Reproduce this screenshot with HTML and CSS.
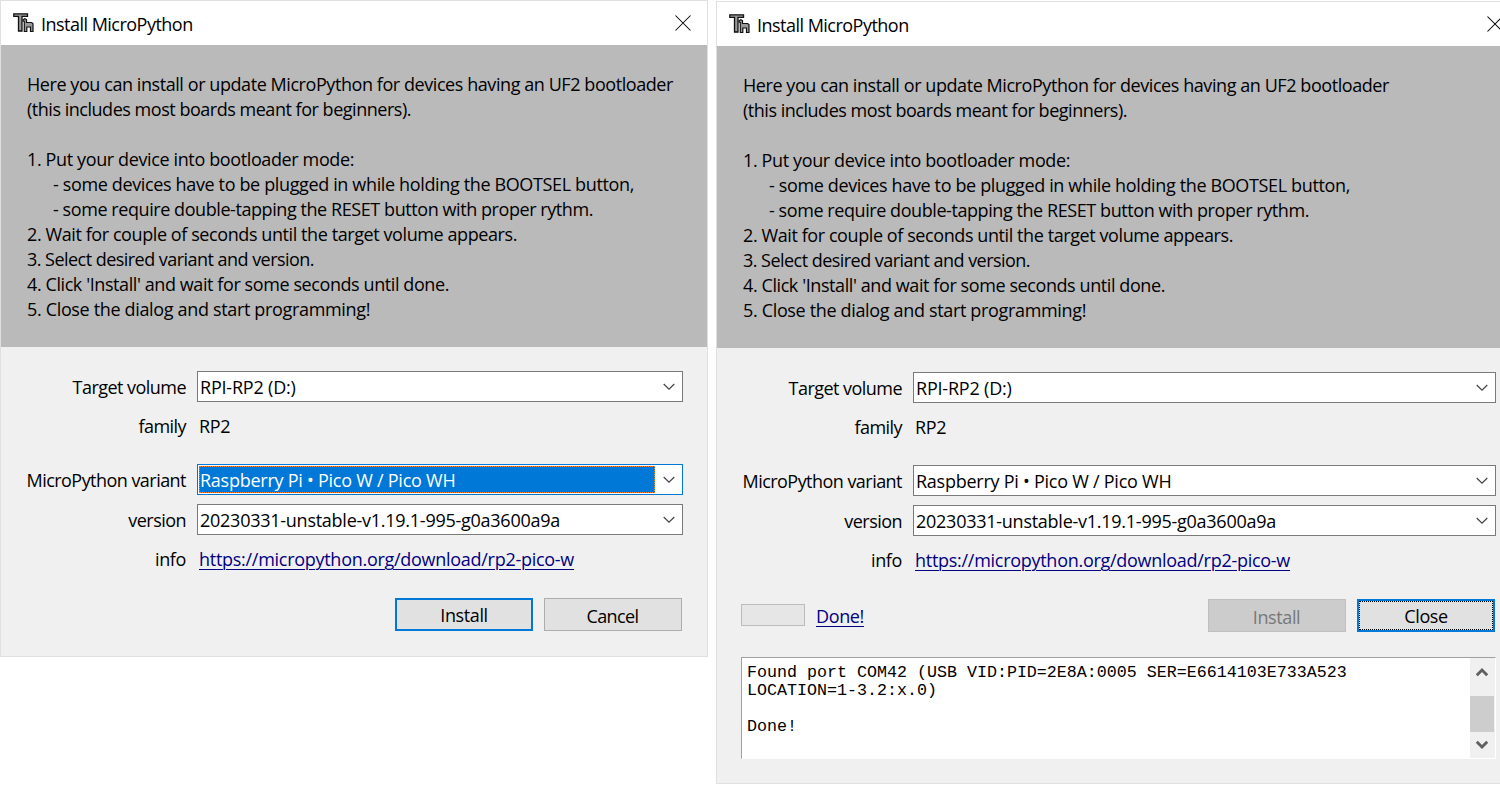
FILE: index.html
```
<!DOCTYPE html>
<html lang="en">
<head>
<meta charset="utf-8">
<title>Install MicroPython</title>
<link rel="stylesheet" href="styles.css">
</head>
<body>
<svg class="defs" aria-hidden="true">
  <symbol id="logo" viewBox="0 0 22 20">
    <path d="M.8 .8H14.500V3.400H9V18H5.500V3.400H.8Z" fill="#999" stroke="#111" stroke-width="1.300"/>
    <path d="M10 8V6.800L11.800 5.600L13.500 6.500V9.500H18.500L20 10.500V18.500H17.500V14H13.800V18.500H11.300V8.500Z" fill="#999" stroke="#111" stroke-width="1.200"/>
  </symbol>
  <symbol id="close" viewBox="0 0 16 16"><path d="M.5.5L15.500 15.500M15.500.5L.5 15.500" fill="none" stroke="#000" stroke-width="1.050"/></symbol>
  <symbol id="down" viewBox="0 0 12 8"><path d="M.7 1L6 6.200L11.300 1" fill="none" stroke="#444" stroke-width="1.200"/></symbol>
  <symbol id="thick-down" viewBox="0 0 12 10"><path d="M.8 1.800L6 7L11.200 1.800" fill="none" stroke="#606060" stroke-width="2.800"/></symbol>
</svg>

<main class="desktop">
  <section class="dialog first">
    <header class="titlebar">
      <svg class="logo"><use href="#logo"/></svg>
      <h1 class="s-title">Install MicroPython</h1>
      <svg class="close"><use href="#close"/></svg>
    </header>
    <div class="intro">
      <p class="s-here">Here you can install or update MicroPython for devices having an UF2 bootloader</p>
      <p class="s-this">(this includes most boards meant for beginners).</p>
      <p class="gap"></p>
      <p class="s-put">1. Put your device into bootloader mode:</p>
      <p class="sub s-some">- some devices have to be plugged in while holding the BOOTSEL button,</p>
      <p class="sub s-req">- some require double-tapping the RESET button with proper rythm.</p>
      <p class="s-wait">2. Wait for couple of seconds until the target volume appears.</p>
      <p class="s-sel">3. Select desired variant and version.</p>
      <p class="s-click">4. Click 'Install' and wait for some seconds until done.</p>
      <p class="s-end">5. Close the dialog and start programming!</p>
    </div>
    <div class="form">
      <label class="s-label">Target volume</label>
      <div class="select"><span class="s-rpi">RPI-RP2 (D:)</span><svg><use href="#down"/></svg></div>
      <label class="s-label plain">family</label>
      <span class="value s-rp">RP2</span>
      <label class="s-label">MicroPython variant</label>
      <div class="select focused"><span class="s-rasp">Raspberry Pi • Pico W / Pico WH</span><svg><use href="#down"/></svg></div>
      <label class="s-label">version</label>
      <div class="select"><span class="s-ver">20230331-unstable-v1.19.1-995-g0a3600a9a</span><svg><use href="#down"/></svg></div>
      <label class="s-put plain">info</label>
      <span class="value"><a class="s-url">https://micropython.org/download/rp2-pico-w</a></span>
    </div>
    <footer class="actions">
      <button class="btn default s-btn">Install</button>
      <button class="btn s-cancel">Cancel</button>
    </footer>
  </section>

  <section class="dialog second">
    <header class="titlebar">
      <svg class="logo"><use href="#logo"/></svg>
      <h1 class="s-title">Install MicroPython</h1>
      <svg class="close"><use href="#close"/></svg>
    </header>
    <div class="intro">
      <p class="s-here">Here you can install or update MicroPython for devices having an UF2 bootloader</p>
      <p class="s-this">(this includes most boards meant for beginners).</p>
      <p class="gap"></p>
      <p class="s-put">1. Put your device into bootloader mode:</p>
      <p class="sub s-some">- some devices have to be plugged in while holding the BOOTSEL button,</p>
      <p class="sub s-req">- some require double-tapping the RESET button with proper rythm.</p>
      <p class="s-wait">2. Wait for couple of seconds until the target volume appears.</p>
      <p class="s-sel">3. Select desired variant and version.</p>
      <p class="s-click">4. Click 'Install' and wait for some seconds until done.</p>
      <p class="s-end">5. Close the dialog and start programming!</p>
    </div>
    <div class="form">
      <label class="s-label">Target volume</label>
      <div class="select"><span class="s-rpi">RPI-RP2 (D:)</span><svg><use href="#down"/></svg></div>
      <label class="s-label plain">family</label>
      <span class="value s-rp">RP2</span>
      <label class="s-label">MicroPython variant</label>
      <div class="select"><span class="s-rasp">Raspberry Pi • Pico W / Pico WH</span><svg><use href="#down"/></svg></div>
      <label class="s-label">version</label>
      <div class="select"><span class="s-ver">20230331-unstable-v1.19.1-995-g0a3600a9a</span><svg><use href="#down"/></svg></div>
      <label class="s-put plain">info</label>
      <span class="value"><a class="s-url">https://micropython.org/download/rp2-pico-w</a></span>
    </div>
    <footer class="actions">
      <div class="progress"></div>
      <a class="status s-put">Done!</a>
      <button class="btn disabled s-btn">Install</button>
      <button class="btn default pressed s-btn">Close</button>
    </footer>
    <div class="log">
      <pre>Found port COM42 (USB VID:PID=2E8A:0005 SER=E6614103E733A523
LOCATION=1-3.2:x.0)

Done!</pre>
      <div class="scrollbar">
        <svg class="up"><use href="#thick-down"/></svg>
        <div class="thumb"></div>
        <svg><use href="#thick-down"/></svg>
      </div>
    </div>
  </section>
</main>
</body>
</html>
```
FILE: styles.css
```
* { box-sizing: border-box; }
body {
  margin: 0;
  height: 793px;
  overflow: hidden;
  background: #fff;
  color: #000;
  font: 18px/25px "Open Sans", "Noto Sans", sans-serif;
}
.defs { position: absolute; width: 0; height: 0; }
h1, p, pre { margin: 0; font-weight: 400; white-space: pre; }

.desktop { display: flex; align-items: flex-start; gap: 8px; }
.dialog {
  flex: none;
  border: 1px solid #e0e0e0;
  background: #f0f0f0;
}
.first { width: 708px; height: 657px; }
.second { width: 809px; height: 783px; margin-top: 1px; }

.titlebar {
  display: flex;
  align-items: center;
  height: 44px;
  padding: 0 16px 0 12px;
  background: #fff;
}
.titlebar h1 { margin-left: 6px; padding-top: 2px; font-size: 18px; }
.logo { width: 22px; height: 20px; }
.close { width: 16px; height: 16px; margin-left: auto; }
.second .close { margin-right: 5px; }

.intro { height: 302px; padding: 27px 26px 0; background: #bababa; }
.intro p { height: 25px; }
.intro .sub { padding-left: 26px; }

.form {
  display: grid;
  grid-template-columns: 185px 486px;
  grid-template-rows: 31px 44px 31px 31px 31px;
  gap: 9px 11px;
  padding-top: 24px;
}
.second .form { grid-template-columns: 185px 583px; }
.form label { justify-self: end; height: 31px; line-height: 32px; white-space: nowrap; }
.form .plain { line-height: 31px; }
.value { height: 31px; padding-left: 2px; line-height: 30px; }
.select {
  display: flex;
  align-items: center;
  justify-content: space-between;
  height: 31px;
  padding: 1px 7px 1px 2px;
  border: 1px solid #7a7a7a;
  background: #fff;
}
.select span { padding-top: 2px; line-height: 27px; white-space: pre; }
.select svg { width: 12px; height: 8px; }
.focused { border-color: #0078d7; padding-left: 1px; }
.focused span {
  width: 456px;
  height: 27px;
  padding: 0;
  border: 1px dotted #ff8728;
  background: #0078d7;
  color: #fff;
}
a { color: #000080; text-decoration: underline; text-underline-offset: 3px; text-decoration-thickness: 1px; }

.actions { display: flex; justify-content: flex-end; gap: 11px; padding: 23px 25px 0 24px; }
.second .actions { padding-right: 29px; }
.btn {
  width: 138px;
  height: 33px;
  padding: 3px 1px 0 0;
  border: 1px solid #adadad;
  background: #e1e1e1;
  color: #000;
  font-family: inherit;
  font-size: 18px;
  line-height: 27px;
}
.default { border: 2px solid #0078d7; padding: 2px 0 0; }
.disabled { border-color: #bfbfbf; background: #ccc; color: #787878; }
.pressed { outline: 1px dotted #000; outline-offset: -3px; }
.progress { width: 64px; height: 22px; margin-top: 5px; border: 1px solid #bcbcbc; background: #e6e6e6; }
.status { margin: 5px auto 0 0; }

.log {
  display: flex;
  justify-content: space-between;
  width: 755px;
  height: 102px;
  margin: 25px 0 0 24px;
  border: 1px solid #a0a0a0;
  border-right-color: #fff;
  border-bottom-color: #fff;
  background: #fff;
}
pre { padding: 6px 5px; font: 16.67px/18px "Liberation Mono", monospace; }
.scrollbar { display: flex; flex-direction: column; align-items: center; width: 25px; padding: 9px 1px 8px 0; background: #f0f0f0; }
.scrollbar svg { width: 12px; height: 10px; }
.scrollbar .up { transform: scaleY(-1); }
.thumb { width: 24px; height: 36px; margin: 19px 0 8px; background: #cdcdcd; }

/* Tracking per string */
.s-here { letter-spacing: -.43px; }
.s-this { letter-spacing: -.475px; }
.s-put { letter-spacing: -.375px; }
.s-some { letter-spacing: -.36px; }
.s-req { letter-spacing: -.427px; }
.s-wait { letter-spacing: -.413px; }
.s-sel { letter-spacing: -.535px; }
.s-click { letter-spacing: -.413px; }
.s-end { letter-spacing: -.34px; }
.s-label { letter-spacing: -.54px; }
.s-url { letter-spacing: -.28px; }
.s-ver { letter-spacing: -.257px; }
.s-rasp { letter-spacing: -.25px; }
.s-rpi { letter-spacing: -.2px; }
.s-rp { letter-spacing: -.4px; }
.s-title { letter-spacing: -.52px; }
.s-btn { letter-spacing: -.4px; }
.s-cancel { letter-spacing: -.6px; }
```
